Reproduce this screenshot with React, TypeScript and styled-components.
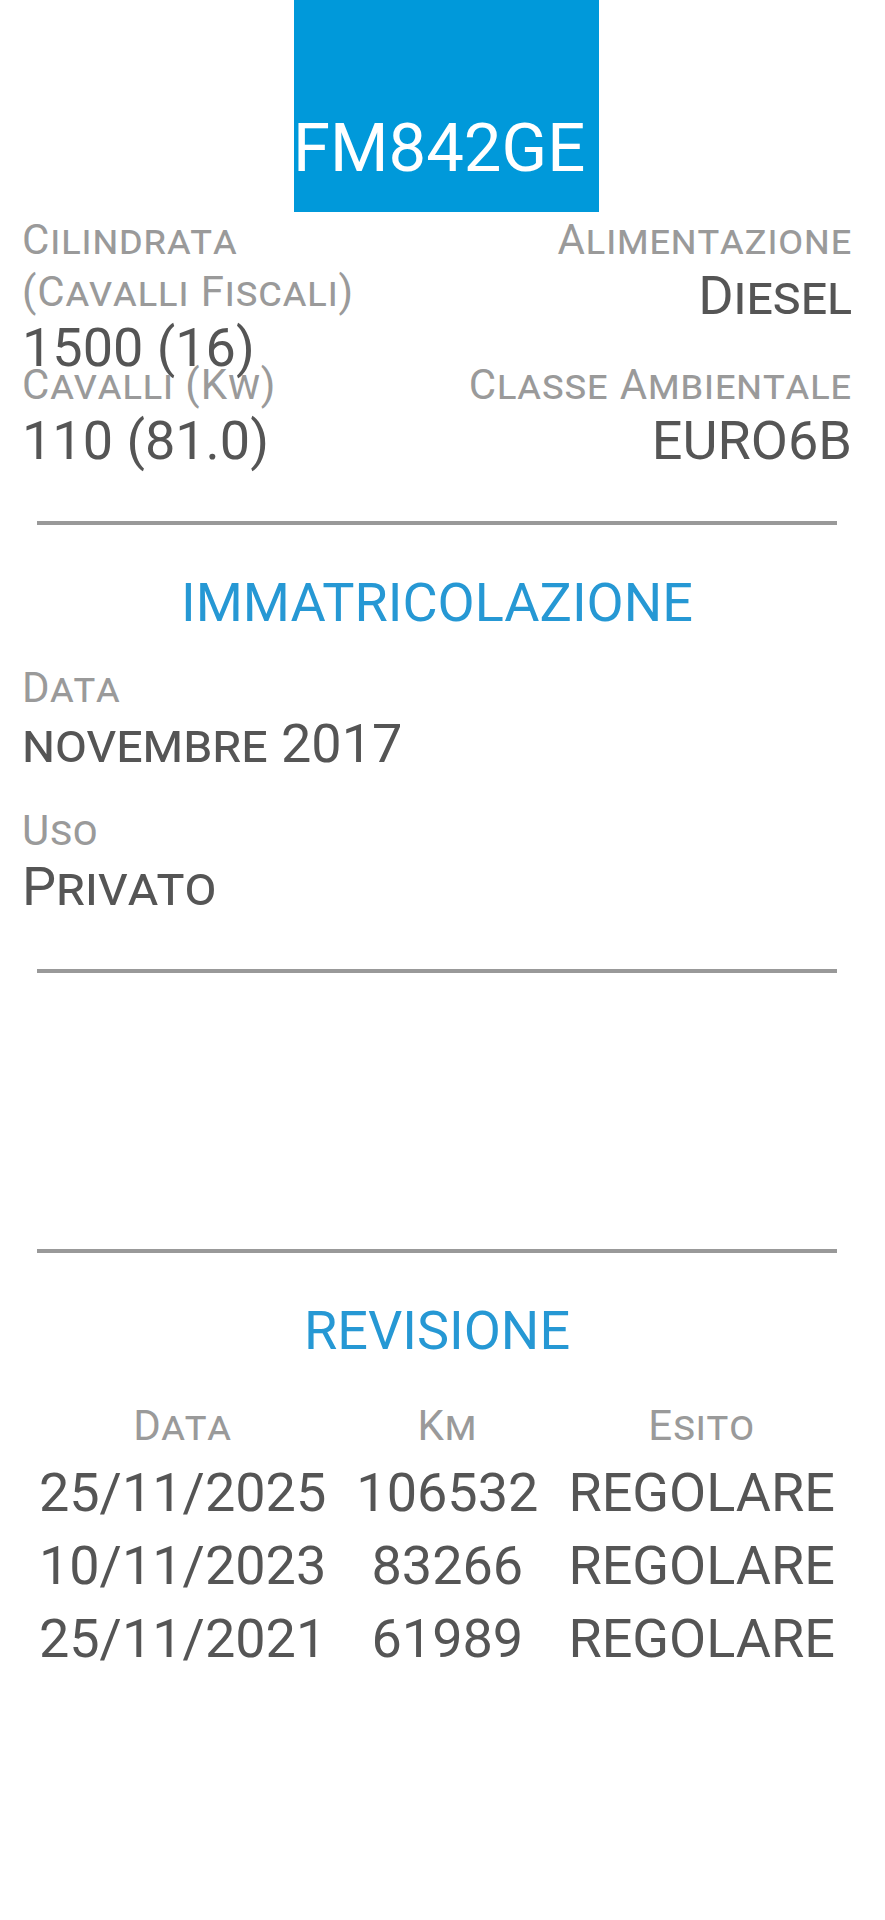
import React from "react";
import styled, { createGlobalStyle } from "styled-components";

const PALETTE = {
  plate: "#0099da",
  title: "#2698d4",
  label: "#9a9a9a",
  value: "#555555",
  rule: "#999999",
  white: "#ffffff",
};

const GlobalStyle = createGlobalStyle`
  html, body {
    margin: 0;
    padding: 0;
    background: ${PALETTE.white};
  }

  body {
    font-family: Roboto, "Noto Sans", "Liberation Sans", sans-serif;
    -webkit-font-smoothing: antialiased;
  }
`;

const PageEl = styled.div`
  width: 885px;
  min-height: 1920px;
  box-sizing: border-box;
  padding: 0 33px 0 22px;
`;

const PlateBarEl = styled.div`
  display: flex;
  justify-content: center;
  padding-left: 8px;
  margin: 0 -33px 0 -22px;
`;

const PlateEl = styled.div`
  width: 305px;
  height: 212px;
  box-sizing: border-box;
  background-color: ${PALETTE.plate};
  display: flex;
  align-items: flex-end;
  padding-bottom: 31px;
  overflow: hidden;
`;

const PlateTextEl = styled.span`
  display: block;
  color: ${PALETTE.white};
  font-size: 67px;
  line-height: 66px;
  white-space: nowrap;
  margin-left: -1px;
`;

const SpecGridEl = styled.div`
  display: grid;
  grid-template-columns: 1fr auto;
  grid-template-rows: 145px 145px;
  margin-top: 2px;
`;

const FieldEl = styled.div<{ $align?: "left" | "right" }>`
  text-align: ${({ $align }) => $align ?? "left"};
  min-height: 0;
`;

const LabelEl = styled.div`
  font-size: 42px;
  line-height: 52px;
  letter-spacing: 0.9px;
  font-variant: small-caps;
  color: ${PALETTE.label};
  white-space: nowrap;
`;

const ValueEl = styled.div`
  font-size: 54px;
  line-height: 60px;
  font-variant: small-caps;
  color: ${PALETTE.value};
  white-space: nowrap;
`;

const RuleEl = styled.hr<{ $top: number }>`
  border: none;
  height: 4px;
  background-color: ${PALETTE.rule};
  margin: ${({ $top }) => $top}px 15px 0;
`;

const SectionEl = styled.section<{ $height?: number }>`
  padding: 48px 0 52px;
  ${({ $height }) => ($height ? `height: ${$height}px; box-sizing: border-box;` : "")}
`;

const SectionTitleEl = styled.h2`
  margin: 0;
  font-size: 54px;
  line-height: 60px;
  font-weight: 400;
  text-align: center;
  color: ${PALETTE.title};
`;

const FieldListEl = styled.div`
  display: flex;
  flex-direction: column;
  gap: 31px;
  margin-top: 29px;
`;

const HistoryEl = styled.div`
  display: grid;
  grid-template-columns: repeat(3, auto);
  justify-content: center;
  column-gap: 30px;
  margin-top: 39px;
`;

const HeadCellEl = styled.div`
  font-size: 42px;
  line-height: 52px;
  letter-spacing: 0.9px;
  padding-bottom: 4px;
  font-variant: small-caps;
  color: ${PALETTE.label};
  text-align: center;
`;

const CellEl = styled.div`
  font-size: 54px;
  line-height: 73px;
  color: ${PALETTE.value};
  text-align: center;
  white-space: nowrap;
`;

const revisions = [
  { date: "25/11/2025", km: "106532", outcome: "REGOLARE" },
  { date: "10/11/2023", km: "83266", outcome: "REGOLARE" },
  { date: "25/11/2021", km: "61989", outcome: "REGOLARE" },
];

const App = () => (
  <>
    <GlobalStyle />
    <PageEl>
      <PlateBarEl>
        <PlateEl>
          <PlateTextEl>FM842GE</PlateTextEl>
        </PlateEl>
      </PlateBarEl>

      <SpecGridEl>
        <FieldEl>
          <LabelEl>
            Cilindrata
            <br />
            (Cavalli Fiscali)
          </LabelEl>
          <ValueEl>1500 (16)</ValueEl>
        </FieldEl>
        <FieldEl $align="right">
          <LabelEl>Alimentazione</LabelEl>
          <ValueEl>Diesel</ValueEl>
        </FieldEl>
        <FieldEl>
          <LabelEl>Cavalli (Kw)</LabelEl>
          <ValueEl>110 (81.0)</ValueEl>
        </FieldEl>
        <FieldEl $align="right">
          <LabelEl>Classe Ambientale</LabelEl>
          <ValueEl>EURO6B</ValueEl>
        </FieldEl>
      </SpecGridEl>

      <RuleEl $top={17} />

      <SectionEl>
        <SectionTitleEl>IMMATRICOLAZIONE</SectionTitleEl>
        <FieldListEl>
          <FieldEl>
            <LabelEl>Data</LabelEl>
            <ValueEl>novembre 2017</ValueEl>
          </FieldEl>
          <FieldEl>
            <LabelEl>Uso</LabelEl>
            <ValueEl>Privato</ValueEl>
          </FieldEl>
        </FieldListEl>
      </SectionEl>

      <RuleEl $top={0} />

      <SectionEl $height={276} />

      <RuleEl $top={0} />

      <SectionEl>
        <SectionTitleEl>REVISIONE</SectionTitleEl>
        <HistoryEl>
          <HeadCellEl>Data</HeadCellEl>
          <HeadCellEl>Km</HeadCellEl>
          <HeadCellEl>Esito</HeadCellEl>
          {revisions.map((r) => (
            <React.Fragment key={r.date}>
              <CellEl>{r.date}</CellEl>
              <CellEl>{r.km}</CellEl>
              <CellEl>{r.outcome}</CellEl>
            </React.Fragment>
          ))}
        </HistoryEl>
      </SectionEl>
    </PageEl>
  </>
);

export default App;
